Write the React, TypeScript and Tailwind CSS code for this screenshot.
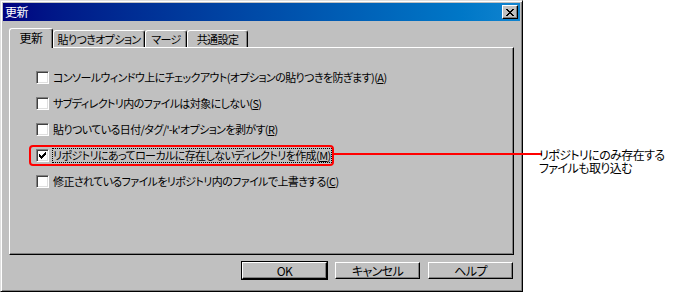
import type { ReactNode } from "react";

const ui = "font-['Noto_Sans_CJK_JP','Noto_Sans',sans-serif] text-[11px] tracking-[-0.6px] [font-feature-settings:'palt']";

type Option = {
  label: string;
  key: string;
  checked?: boolean;
  focused?: boolean;
};

const options: Option[] = [
  { label: "コンソールウィンドウ上にチェックアウト(オプションの貼りつきを防ぎます)", key: "A" },
  { label: "サブディレクトリ内のファイルは対象にしない", key: "S" },
  { label: "貼りついている日付/タグ/'-k'オプションを剥がす", key: "R" },
  { label: "リポジトリにあってローカルに存在しないディレクトリを作成", key: "M", checked: true, focused: true },
  { label: "修正されているファイルをリポジトリ内のファイルで上書きする", key: "C" },
];

const tabs = ["更新", "貼りつきオプション", "マージ", "共通設定"];
const tabWidths = ["w-[44px]", "w-[92px]", "w-[42px]", "w-[61px]"];

function Checkbox({ checked }: { checked?: boolean }) {
  return (
    <span className="flex h-[13px] w-[13px] shrink-0 items-center justify-center border border-t-[#808080] border-l-[#808080] border-r-white border-b-white bg-white shadow-[inset_1px_1px_0_#404040,inset_-1px_-1px_0_#dfdfdf]">
      {checked ? (
        <svg width="7" height="7" viewBox="0 0 7 7" shapeRendering="crispEdges">
          <path d="M0 2h1v3H0zM1 3h1v3H1zM2 4h1v3H2zM3 3h1v3H3zM4 2h1v3H4zM5 1h1v3H5zM6 0h1v3H6z" fill="#000" />
        </svg>
      ) : null}
    </span>
  );
}

function Button({ children, isDefault }: { children: ReactNode; isDefault?: boolean }) {
  return (
    <div className={isDefault ? "border border-black" : "border border-transparent"}>
      <div className="flex h-[17px] w-[85px] items-center justify-center border border-t-white border-l-white border-r-black border-b-black bg-[#c0c0c0] text-[12px] leading-none shadow-[inset_-1px_-1px_0_#808080]">
        {children}
      </div>
    </div>
  );
}

export default function App() {
  return (
    <div className={`relative flex h-[292px] w-[700px] overflow-hidden bg-white text-black ${ui}`}>
      <div className="flex h-[292px] w-[523px] flex-col border border-t-[#dfdfdf] border-l-[#dfdfdf] border-r-black border-b-black bg-[#c0c0c0] p-[2px] shadow-[inset_1px_1px_0_#fff,inset_-1px_-1px_0_#808080]">
        <div className="flex h-[18px] items-center justify-between bg-linear-to-r from-[#000080] to-[#1084d0] pr-[2px] pl-[2px]">
          <span className="text-[12px] leading-none text-white">更新</span>
          <div className="flex h-[14px] w-[16px] items-center justify-center border border-t-white border-l-white border-r-black border-b-black bg-[#c0c0c0] shadow-[inset_-1px_-1px_0_#808080]">
            <svg width="8" height="7" viewBox="0 0 8 7" shapeRendering="crispEdges">
              <path d="M0 0h2v1H0zM6 0h2v1H6zM1 1h2v1H1zM5 1h2v1H5zM2 2h4v1H2zM3 3h2v1H3zM2 4h4v1H2zM1 5h2v1H1zM5 5h2v1H5zM0 6h2v1H0zM6 6h2v1H6z" fill="#000" />
            </svg>
          </div>
        </div>

        <div className="flex flex-1 flex-col px-[6px] pt-[7px]">
          <div className="flex h-[19px] items-end">
            {tabs.map((tab, index) => {
              const active = index === 0;
              return (
                <div
                  key={tab}
                  className={`${tabWidths[index]} flex items-center justify-center rounded-t-[3px] border-t border-l border-r border-t-white border-l-white border-r-black whitespace-nowrap shadow-[inset_-1px_0_0_#808080] ${
                    active ? "relative z-10 -mb-px h-[20px] bg-[#c0c0c0] pb-[2px] text-[12px]" : "h-[17px]"
                  }`}
                >
                  <span className="leading-none">{tab}</span>
                </div>
              );
            })}
          </div>

          <div className="flex h-[208px] flex-col gap-[13px] border border-t-white border-l-white border-r-black border-b-black pt-[23px] pl-[26px] shadow-[inset_-1px_-1px_0_#808080]">
            {options.map((option) => (
              <div key={option.key} className="relative flex h-[13px] w-fit items-center">
                {option.focused ? (
                  <div className="pointer-events-none absolute -top-[4px] -right-[2px] -bottom-[4px] -left-[7px] rounded-[4px] border-2 border-[#ff0000]">
                    <div className="absolute top-[6px] left-full h-[2px] w-[210px] bg-[#ff0000]" />
                  </div>
                ) : null}
                <Checkbox checked={option.checked} />
                <span
                  className={`ml-[3px] border border-dotted leading-[13px] whitespace-nowrap ${
                    option.focused ? "border-black" : "border-transparent"
                  }`}
                >
                  {option.label}(<span className="underline underline-offset-1">{option.key}</span>)
                </span>
              </div>
            ))}
          </div>

          <div className="mt-[6px] flex justify-end gap-[6px]">
            <Button isDefault>OK</Button>
            <Button>キャンセル</Button>
            <Button>ヘルプ</Button>
          </div>
        </div>
      </div>

      <p className="absolute top-[148px] left-[539px] text-[12px] leading-[13px]">
        リポジトリにのみ存在する
        <br />
        ファイルも取り込む
      </p>
    </div>
  );
}
